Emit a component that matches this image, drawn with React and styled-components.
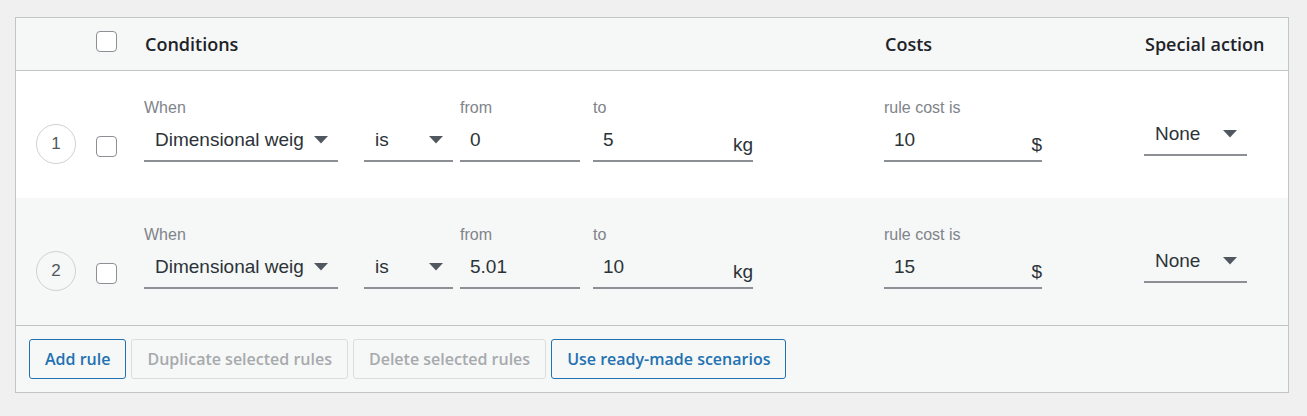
import React from 'react';
import styled, { createGlobalStyle } from 'styled-components';

const GlobalStyle = createGlobalStyle`
  body {
    margin: 0;
    background: #f0f0f1;
    font-family: "Liberation Sans", Arial, sans-serif;
  }
`;

const Page = styled.div`
  padding: 17px 19px 0 15px;
`;

const Table = styled.div`
  width: 1274px;
  box-sizing: border-box;
  border: 1px solid #c3c4c7;
  background: #fff;
`;

const Grid = styled.div`
  display: grid;
  grid-template-columns: 74px 54px 740px 260px 144px;
`;

const HeadRow = styled(Grid)`
  height: 52px;
  align-items: center;
  background: #f6f7f7;
  border-bottom: 1px solid #c3c4c7;
`;

const HeadCell = styled.div`
  font-family: "Open Sans", "Noto Sans", sans-serif;
  font-weight: 600;
  font-size: 18px;
  color: #1d2327;
  padding-left: ${(p) => p.$pad || 0}px;
`;

const RuleRow = styled(Grid)`
  height: 127px;
  background: ${(p) => (p.$alt ? '#f6f7f7' : '#fff')};
`;

const NumCell = styled.div`
  padding: 53px 0 0 20px;
`;

const Number = styled.div`
  width: 40px;
  height: 40px;
  box-sizing: border-box;
  border: 1px solid #cfd1d4;
  border-radius: 50%;
  display: flex;
  align-items: center;
  justify-content: center;
  font-size: 17px;
  color: #50575e;
`;

const CheckCell = styled.div`
  padding: ${(p) => (p.$head ? 0 : 65)}px 0 0 6px;
  align-self: ${(p) => (p.$head ? 'center' : 'start')};
`;

const Checkbox = styled.div`
  width: 21px;
  height: 21px;
  box-sizing: border-box;
  border: 1px solid #8c8f94;
  border-radius: 4px;
  background: #fff;
  margin-top: ${(p) => (p.$head ? -5 : 0)}px;
`;

const Conditions = styled.div`
  display: flex;
  padding-top: 28px;
`;

const Field = styled.div`
  width: ${(p) => p.$w}px;
  margin-left: ${(p) => p.$ml || 0}px;
  align-self: ${(p) => (p.$center ? 'center' : 'start')};
`;

const Label = styled.div`
  height: 18px;
  line-height: 18px;
  font-size: 16px;
  color: #80848a;
  margin-bottom: 3px;
`;

const Control = styled.div`
  height: 40px;
  display: flex;
  align-items: center;
  border-bottom: 2px solid #8c8f94;
  padding: 0 9px 0 ${(p) => p.$pl || 10}px;
`;

const Value = styled.div`
  flex: 1;
  min-width: 0;
  overflow: hidden;
  white-space: nowrap;
  font-size: 19px;
  color: #2c3338;
  margin-right: ${(p) => p.$mr || 0}px;
`;

const Suffix = styled.span`
  font-size: 19px;
  color: #2c3338;
  margin: 10px -9px 0 0;
`;

const Arrow = styled.svg`
  width: 16px;
  height: 8px;
  flex: none;
`;

const SpecialCell = styled.div`
  display: flex;
  align-items: center;
`;

const Footer = styled.div`
  display: flex;
  gap: 5px;
  padding: 13px 13px;
  background: #f6f7f7;
  border-top: 1px solid #c3c4c7;
`;

const Button = styled.button`
  height: 40px;
  padding: 0 15px;
  border-radius: 3px;
  font-family: "Open Sans", "Noto Sans", sans-serif;
  font-weight: 600;
  font-size: 16px;
  background: #f6f7f7;
  border: 1px solid ${(p) => (p.disabled ? '#dcdcde' : '#2271b1')};
  color: ${(p) => (p.disabled ? '#a7aaad' : '#2271b1')};
`;

const DropArrow = () => (
  <Arrow viewBox="0 0 16 8">
    <polygon points="1,0 15,0 8,7.5" fill="#50575e" />
  </Arrow>
);

const Select = ({ value, width, ml, pl = 11, label, clip }) => (
  <Field $w={width} $ml={ml} $center={label === undefined}>
    {label !== undefined && <Label>{label}</Label>}
    <Control $pl={pl}>
      <Value $mr={clip}>{value}</Value>
      <DropArrow />
    </Control>
  </Field>
);

const Input = ({ value, width, ml, label, suffix }) => (
  <Field $w={width} $ml={ml}>
    <Label>{label}</Label>
    <Control>
      <Value>{value}</Value>
      {suffix && <Suffix>{suffix}</Suffix>}
    </Control>
  </Field>
);

const rules = [
  { id: 1, from: '0', to: '5', cost: '10' },
  { id: 2, from: '5.01', to: '10', cost: '15' },
];

export default function App() {
  return (
    <Page>
      <GlobalStyle />
      <Table>
        <HeadRow>
          <div />
          <CheckCell $head>
            <Checkbox $head />
          </CheckCell>
          <HeadCell $pad={1}>Conditions</HeadCell>
          <HeadCell $pad={1}>Costs</HeadCell>
          <HeadCell $pad={1}>Special action</HeadCell>
        </HeadRow>

        {rules.map((r, i) => (
          <RuleRow key={r.id} $alt={i % 2 === 1}>
            <NumCell>
              <Number>{r.id}</Number>
            </NumCell>
            <CheckCell>
              <Checkbox />
            </CheckCell>
            <Conditions>
              <Select label="When" value="Dimensional weight" width={194} clip={8} />
              <Select label="" value="is" width={89} ml={26} />
              <Input label="from" value={r.from} width={120} ml={7} />
              <Input label="to" value={r.to} width={160} ml={13} suffix="kg" />
            </Conditions>
            <Conditions>
              <Input label="rule cost is" value={r.cost} width={158} suffix="$" />
            </Conditions>
            <SpecialCell>
              <Select value="None" width={103} />
            </SpecialCell>
          </RuleRow>
        ))}

        <Footer>
          <Button>Add rule</Button>
          <Button disabled>Duplicate selected rules</Button>
          <Button disabled>Delete selected rules</Button>
          <Button>Use ready-made scenarios</Button>
        </Footer>
      </Table>
    </Page>
  );
}
